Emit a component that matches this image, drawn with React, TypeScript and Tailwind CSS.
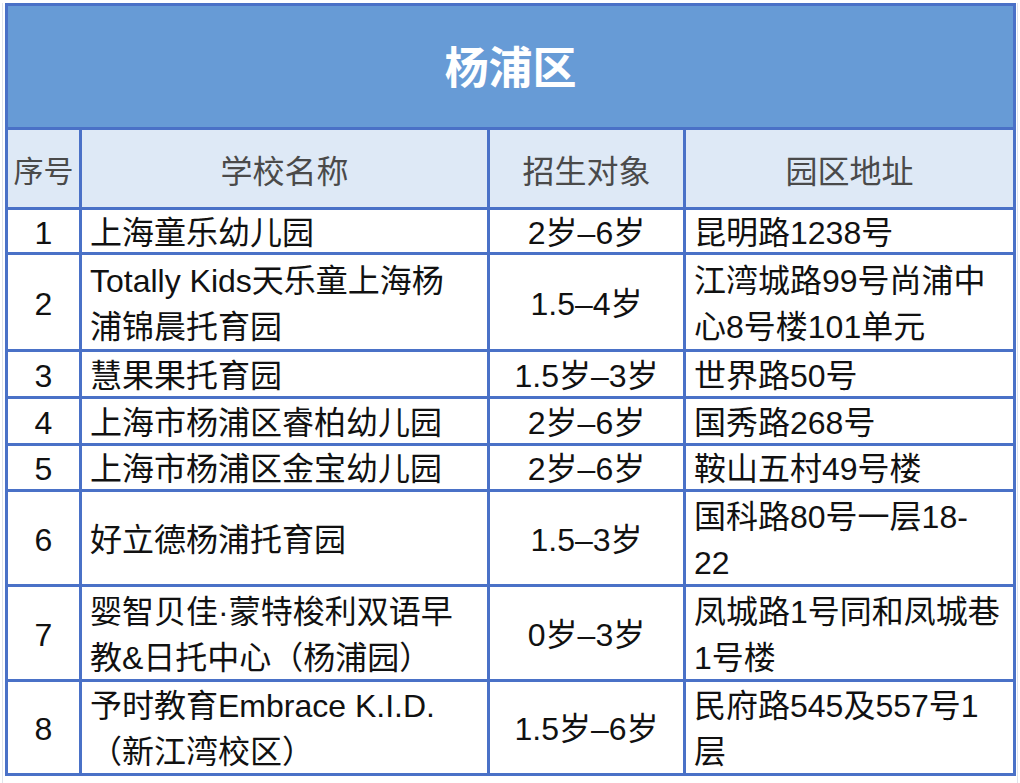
import React from 'react';

type Row = {
  no: string;
  name: string[];
  age: string;
  addr: string[];
};

const rows: Row[] = [
  { no: '1', name: ['上海童乐幼儿园'], age: '2岁–6岁', addr: ['昆明路1238号'] },
  {
    no: '2',
    name: ['Totally Kids天乐童上海杨', '浦锦晨托育园'],
    age: '1.5–4岁',
    addr: ['江湾城路99号尚浦中', '心8号楼101单元'],
  },
  { no: '3', name: ['慧果果托育园'], age: '1.5岁–3岁', addr: ['世界路50号'] },
  { no: '4', name: ['上海市杨浦区睿柏幼儿园'], age: '2岁–6岁', addr: ['国秀路268号'] },
  { no: '5', name: ['上海市杨浦区金宝幼儿园'], age: '2岁–6岁', addr: ['鞍山五村49号楼'] },
  { no: '6', name: ['好立德杨浦托育园'], age: '1.5–3岁', addr: ['国科路80号一层18-', '22'] },
  {
    no: '7',
    name: ['婴智贝佳·蒙特梭利双语早', '教&日托中心（杨浦园）'],
    age: '0岁–3岁',
    addr: ['凤城路1号同和凤城巷', '1号楼'],
  },
  {
    no: '8',
    name: ['予时教育Embrace K.I.D.', '（新江湾校区）'],
    age: '1.5岁–6岁',
    addr: ['民府路545及557号1', '层'],
  },
];

const Lines = ({ lines }: { lines: string[] }) => (
  <div className="flex flex-col">
    {lines.map((l, i) => (
      <span key={i} className="whitespace-nowrap leading-[46px]">
        {l}
      </span>
    ))}
  </div>
);

export default function App() {
  return (
    <div
      className="w-[1020px] h-[783px] bg-white pt-[3px] pl-[2px] overflow-hidden"
      style={{ fontFamily: '"Liberation Sans", "Noto Sans CJK SC", sans-serif' }}
    >
      <div className="w-[1016px] h-[780px] border-l border-r border-[#dfe4ec] pl-[2px]">
        <div className="grid w-[1011px] grid-cols-[71px_405px_193px_327px] grid-rows-[121px_77px_42px_94px_44px_44px_43px_92px_92px_91px] gap-[3px] p-[3px] bg-[#4a71c7] text-[32px] text-[#111]">
          <div className="col-span-4 flex items-center justify-center bg-[#679bd6] pt-[4px] text-white text-[44px] font-bold">
            杨浦区
          </div>

          <div className="flex items-center justify-center bg-[#dee9f6] pt-[6px] text-[#4a4a4a] text-[30px]">序号</div>
          <div className="flex items-center justify-center bg-[#dee9f6] pt-[6px] text-[#4a4a4a]">学校名称</div>
          <div className="flex items-center justify-center bg-[#dee9f6] pt-[6px] text-[#4a4a4a]">招生对象</div>
          <div className="flex items-center justify-center bg-[#dee9f6] pt-[6px] text-[#4a4a4a]">园区地址</div>

          {rows.map((r) => (
            <React.Fragment key={r.no}>
              <div className="flex items-center justify-center bg-white pt-[3px]">{r.no}</div>
              <div className="flex items-center bg-white pl-[8px] pt-[3px]">
                <Lines lines={r.name} />
              </div>
              <div className="flex items-center justify-center bg-white pt-[3px] whitespace-nowrap">{r.age}</div>
              <div className="flex items-center bg-white pl-[8px] pt-[3px]">
                <Lines lines={r.addr} />
              </div>
            </React.Fragment>
          ))}
        </div>
      </div>
    </div>
  );
}
